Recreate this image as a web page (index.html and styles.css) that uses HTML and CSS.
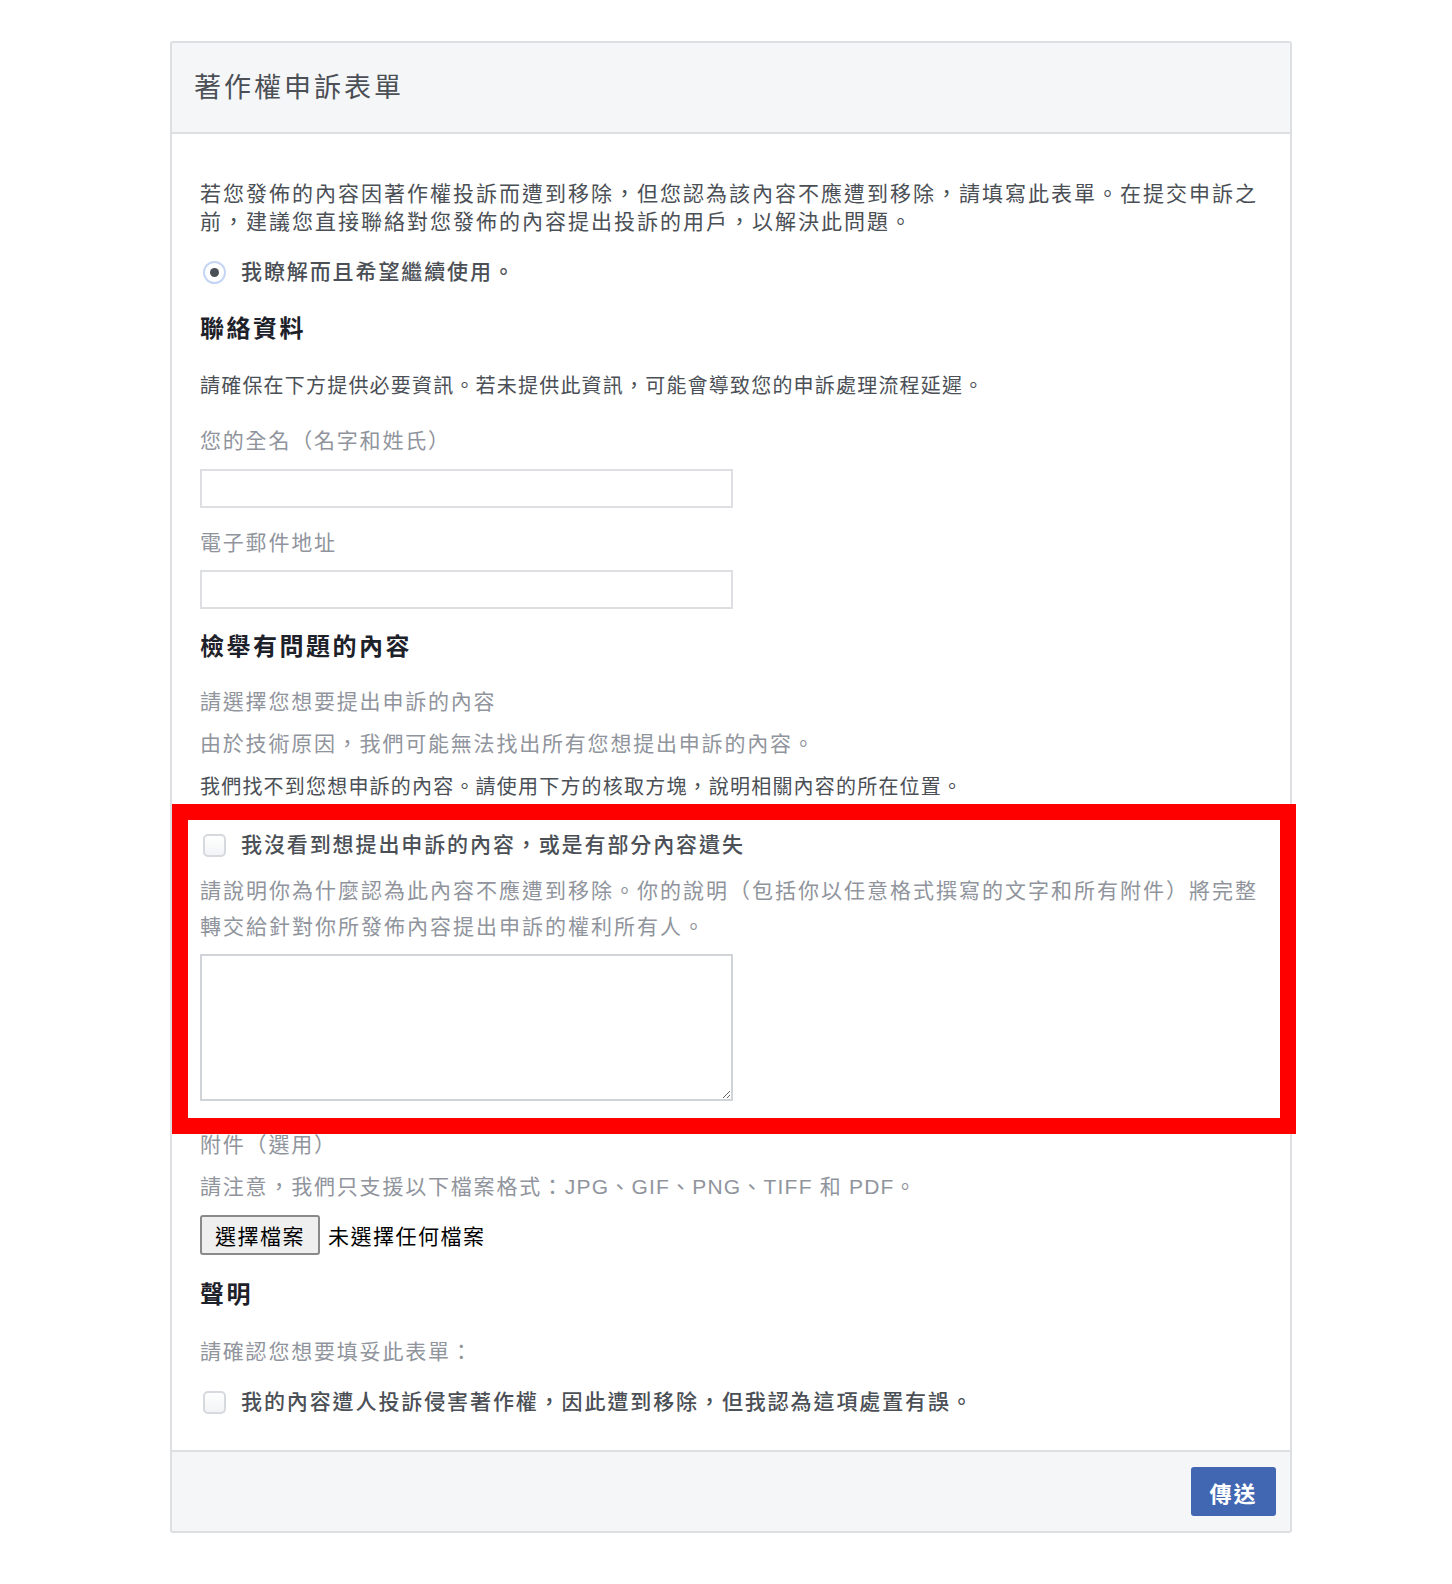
FILE: index.html
```html
<!DOCTYPE html>
<html lang="zh-Hant">
<head>
<meta charset="utf-8">
<title>著作權申訴表單</title>
<link rel="stylesheet" href="styles.css">
</head>
<body>
<div class="card">
  <div class="card-header">
    <h1 class="card-title">著作權申訴表單</h1>
  </div>
  <div class="card-body">
    <p class="intro">若您發佈的內容因著作權投訴而遭到移除，但您認為該內容不應遭到移除，請填寫此表單。在提交申訴之前，建議您直接聯絡對您發佈的內容提出投訴的用戶，以解決此問題。</p>
    <div class="choice choice-ack"><span class="radio"></span><span class="choice-text">我瞭解而且希望繼續使用。</span></div>

    <h2 class="section-title section-contact">聯絡資料</h2>
    <p class="note note-contact">請確保在下方提供必要資訊。若未提供此資訊，可能會導致您的申訴處理流程延遲。</p>
    <div class="field-label label-name">您的全名（名字和姓氏）</div>
    <div class="text-input input-name"></div>
    <div class="field-label label-email">電子郵件地址</div>
    <div class="text-input input-email"></div>

    <h2 class="section-title section-report">檢舉有問題的內容</h2>
    <div class="field-label label-select">請選擇您想要提出申訴的內容</div>
    <div class="field-label label-tech">由於技術原因，我們可能無法找出所有您想提出申訴的內容。</div>
    <p class="note note-missing">我們找不到您想申訴的內容。請使用下方的核取方塊，說明相關內容的所在位置。</p>

    <div class="highlight">
      <div class="choice choice-missing"><span class="checkbox"></span><span class="choice-text">我沒看到想提出申訴的內容，或是有部分內容遺失</span></div>
      <p class="explain">請說明你為什麼認為此內容不應遭到移除。你的說明（包括你以任意格式撰寫的文字和所有附件）將完整轉交給針對你所發佈內容提出申訴的權利所有人。</p>
      <textarea class="textarea"></textarea>
    </div>

    <div class="field-label label-attach">附件（選用）</div>
    <div class="field-label label-formats">請注意，我們只支援以下檔案格式：<span class="formats">JPG、GIF、PNG、TIFF 和 PDF</span>。</div>
    <div class="file-row"><span class="file-button">選擇檔案</span><span class="file-name">未選擇任何檔案</span></div>

    <h2 class="section-title section-declare">聲明</h2>
    <div class="field-label label-confirm">請確認您想要填妥此表單：</div>
    <div class="choice choice-confirm"><span class="checkbox"></span><span class="choice-text">我的內容遭人投訴侵害著作權，因此遭到移除，但我認為這項處置有誤。</span></div>
  </div>
  <div class="card-footer">
    <span class="submit">傳送</span>
  </div>
</div>
</body>
</html>
```

FILE: styles.css
```css
* { box-sizing: border-box; }

body {
  margin: 0;
  background: #ffffff;
  font-family: "Liberation Sans", "Noto Sans CJK TC", sans-serif;
  color: #4b4f56;
}

.card {
  width: 1122px;
  margin: 41px 0 0 170px;
  border: 2px solid #dddfe2;
  border-radius: 3px;
  background: #ffffff;
}

.card-header {
  height: 91px;
  background: #f5f6f7;
  border-bottom: 2px solid #dddfe2;
  display: flex;
  align-items: center;
  padding: 0 0 0 22px;
}

.card-title {
  margin: 0;
  font-size: 27px;
  font-weight: normal;
  letter-spacing: 3px;
  color: #4b4f56;
  line-height: 34px;
}

.card-body {
  padding: 46px 26px 34px 28px;
}

p { margin: 0; }

.intro {
  font-size: 21px;
  letter-spacing: 2px;
  line-height: 28px;
  color: #4b4f56;
}

.choice {
  display: flex;
  align-items: center;
  height: 28px;
  font-size: 21px;
  letter-spacing: 1.9px;
  line-height: 28px;
  color: #4b4f56;
}

.choice-text {
  margin-left: 15px;
  font-weight: 500;
}

.choice-ack { margin-top: 22px; }
.choice-confirm { margin-top: 22px; }

.radio {
  width: 23px;
  height: 23px;
  margin-left: 3px;
  border-radius: 50%;
  border: 2px solid #c5d5f5;
  background: #ffffff;
  display: flex;
  align-items: center;
  justify-content: center;
  flex: none;
}
.radio::after {
  content: "";
  width: 9px;
  height: 9px;
  border-radius: 50%;
  background: #4b4f56;
}

.checkbox {
  width: 23px;
  height: 23px;
  margin-left: 3px;
  border-radius: 5px;
  border: 2px solid #d6d9dd;
  background: linear-gradient(#ffffff, #f2f3f5);
  flex: none;
}

.section-title {
  margin: 0;
  font-size: 24px;
  font-weight: bold;
  letter-spacing: 2.5px;
  line-height: 32px;
  color: #1d2129;
}
.section-contact { margin-top: 27px; }
.section-report { margin-top: 22px; }
.section-declare { margin-top: 24px; }

.note {
  font-size: 20px;
  letter-spacing: 1.2px;
  line-height: 28px;
  color: #4b4f56;
}
.note-contact { margin-top: 27px; }
.note-missing { margin-top: 15px; }

.field-label {
  font-size: 21px;
  letter-spacing: 1.8px;
  line-height: 28px;
  color: #90949c;
}
.label-name { margin-top: 27px; }
.label-email { margin-top: 21px; }
.label-select { margin-top: 25px; }
.label-tech { margin-top: 14px; }
.label-attach { margin-top: 30px; }
.label-formats { margin-top: 14px; }
.label-confirm { margin-top: 27px; }

.formats { letter-spacing: 1.2px; }

.text-input {
  width: 533px;
  height: 39px;
  border: 2px solid #dddfe2;
  background: #ffffff;
}
.input-name { margin-top: 14px; }
.input-email { margin-top: 13px; }

.highlight {
  position: relative;
  margin-top: 30px;
}
.highlight::before {
  content: "";
  position: absolute;
  top: -27px;
  bottom: -33px;
  left: -28px;
  right: -32px;
  border: 16px solid #ff0000;
  pointer-events: none;
}

.explain {
  margin-top: 14px;
  font-size: 21px;
  letter-spacing: 2px;
  line-height: 36px;
  color: #90949c;
}

.textarea {
  display: block;
  width: 533px;
  height: 147px;
  margin: 9px 0 0 0;
  border: 2px solid #d0d3d8;
  border-radius: 0;
  background: #ffffff;
  resize: both;
  outline: none;
}

.file-row {
  display: flex;
  align-items: center;
  margin-top: 14px;
  height: 40px;
}
.file-button {
  display: flex;
  align-items: center;
  justify-content: center;
  width: 120px;
  height: 40px;
  border: 2px solid #8a8a8a;
  border-radius: 3px;
  background: #efefef;
  font-size: 21px;
  letter-spacing: 1.5px;
  color: #000000;
}
.file-name {
  margin-left: 8px;
  font-size: 21px;
  letter-spacing: 1.5px;
  color: #000000;
}

.card-footer {
  height: 81px;
  background: #f5f6f7;
  border-top: 2px solid #dddfe2;
  display: flex;
  align-items: center;
  justify-content: flex-end;
  padding: 0 14px 0 0;
}

.submit {
  display: flex;
  align-items: center;
  justify-content: center;
  width: 85px;
  height: 49px;
  background: #4267b2;
  border-radius: 3px;
  color: #ffffff;
  font-size: 22px;
  font-weight: bold;
  letter-spacing: 2px;
}
```
